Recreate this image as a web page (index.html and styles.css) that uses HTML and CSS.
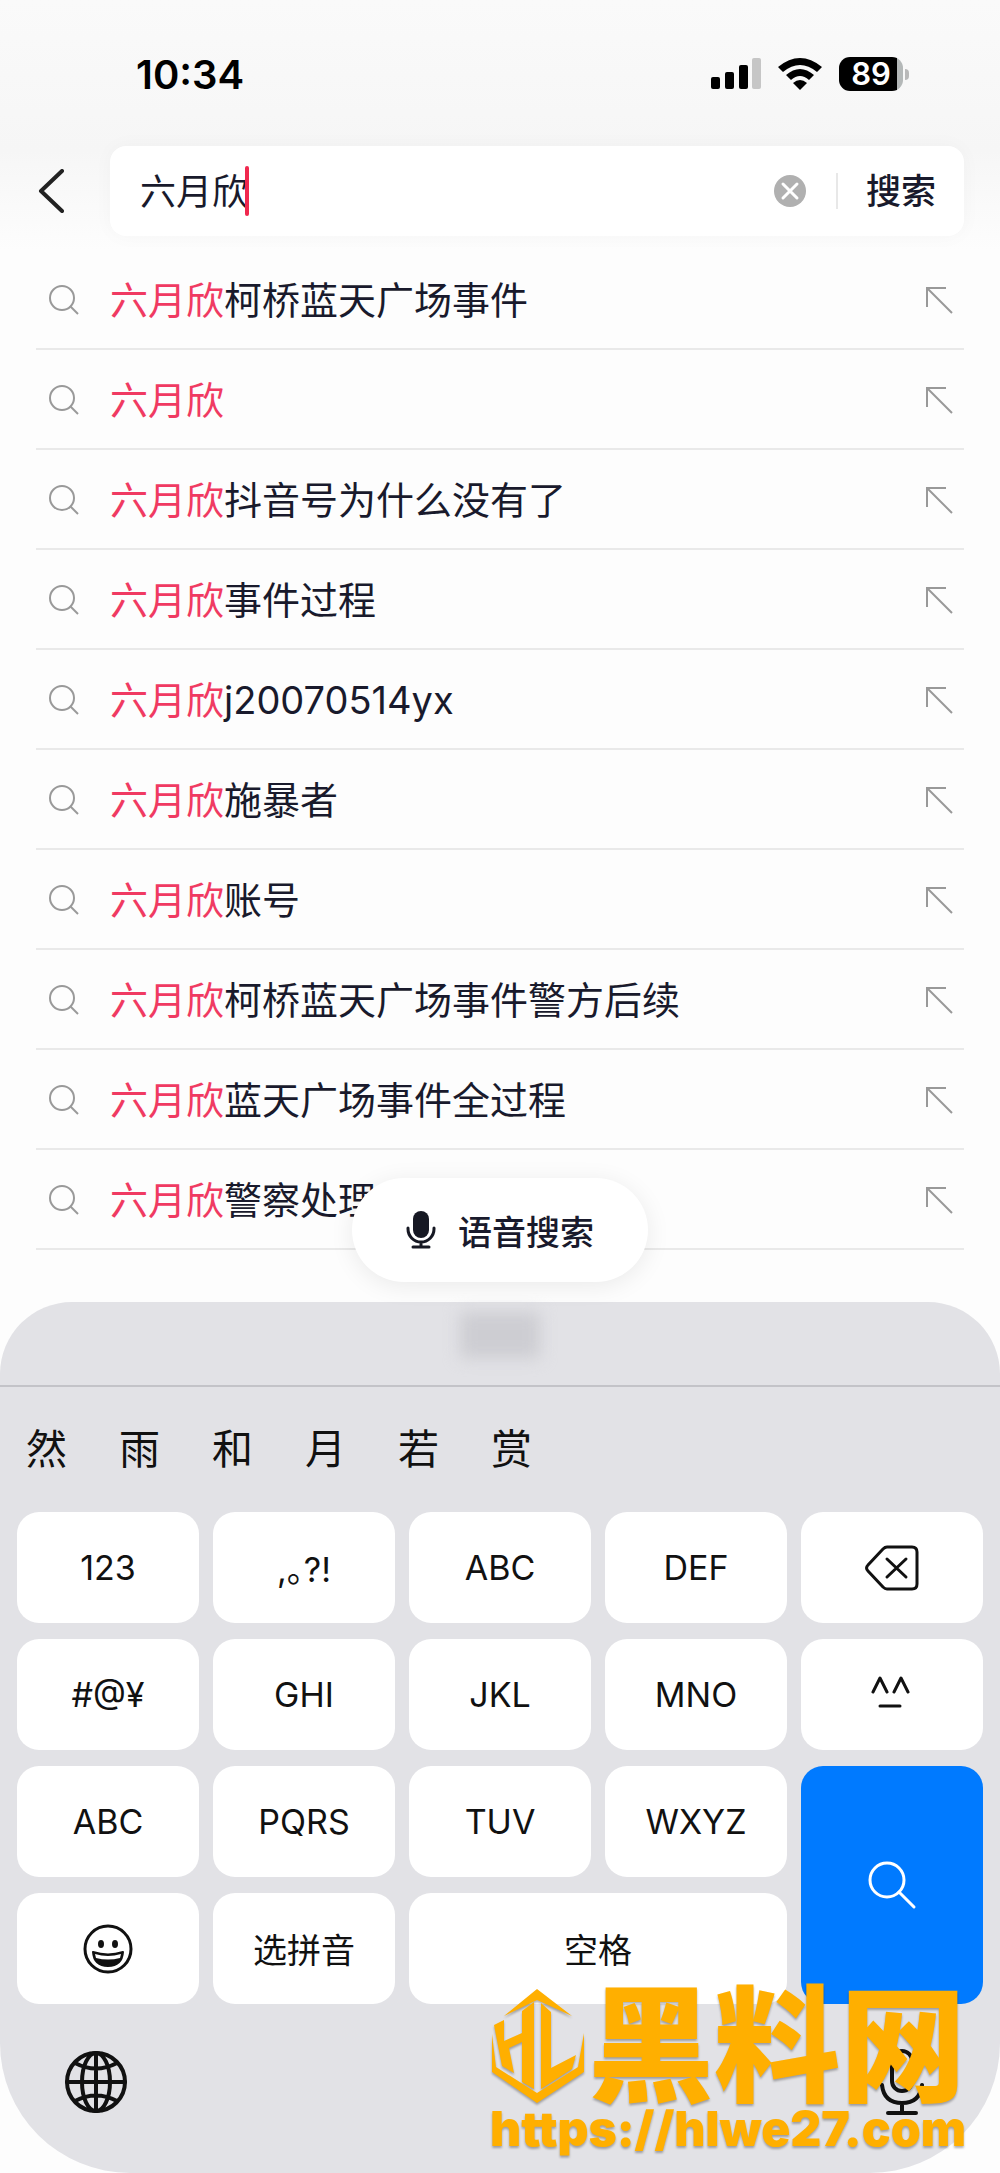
FILE: index.html
```html
<!DOCTYPE html>
<html lang="zh-CN">
<head>
  <meta charset="UTF-8">
  <meta name="viewport" content="width=device-width, initial-scale=1.0">
  <title>搜索</title>
  <link rel="stylesheet" href="styles.css">
</head>
<body>
  <svg class="sprite" aria-hidden="true">
    <symbol id="icon-search" viewBox="0 0 32 32">
      <circle cx="14" cy="14" r="12" /><path d="M22 22l8 8" />
    </symbol>
    <symbol id="icon-fill" viewBox="0 0 32 32">
      <path d="M5 23V4h19M5 4l25 25" />
    </symbol>
  </svg>

  <header class="header">
    <div class="status-bar">
      <span class="time">10:34</span>
      <div class="status-icons">
        <svg width="50" height="32" viewBox="0 0 50 32">
          <rect x="0" y="19" width="9" height="12" rx="2" />
          <rect x="14" y="14" width="9" height="17" rx="2" />
          <rect x="28" y="7" width="9" height="24" rx="2" />
          <rect x="41" y="0" width="9" height="31" rx="2" fill="#c6c6c6" />
        </svg>
        <svg width="44" height="32" viewBox="0 0 44 32">
          <path d="M0 9Q22-9 44 9L39 14Q22 0 5 14Z" />
          <path d="M8 17Q22 5 36 17L31 22Q22 14 13 22Z" />
          <path d="M15 25Q22 19 29 25L22 32Z" />
        </svg>
        <div class="battery"><span class="battery-level">89</span></div>
      </div>
    </div>

    <form class="search-bar">
      <button type="button" class="back" aria-label="返回">
        <svg width="30" height="44" viewBox="0 0 30 44"><path d="M26 2L5 22l21 20" /></svg>
      </button>
      <div class="search-box">
        <div class="field">
          <input type="text" id="keyword" value="六月欣" aria-label="搜索关键词">
          <span class="caret"></span>
        </div>
        <button type="button" class="clear" aria-label="清除">
          <svg width="32" height="32" viewBox="0 0 32 32">
            <circle cx="16" cy="16" r="16" fill="#b0b0b0" />
            <path d="M9 9l14 14M23 9L9 23" stroke="#fff" stroke-width="3" stroke-linecap="round" />
          </svg>
        </button>
        <button type="submit" class="submit">搜索</button>
      </div>
    </form>
  </header>

  <main class="results">
    <ul class="suggestions">
      <li><a href="#"><svg class="glass"><use href="#icon-search" /></svg><span class="word"><em>六月欣</em>柯桥蓝天广场事件</span><svg class="fill"><use href="#icon-fill" /></svg></a></li>
      <li><a href="#"><svg class="glass"><use href="#icon-search" /></svg><span class="word"><em>六月欣</em></span><svg class="fill"><use href="#icon-fill" /></svg></a></li>
      <li><a href="#"><svg class="glass"><use href="#icon-search" /></svg><span class="word"><em>六月欣</em>抖音号为什么没有了</span><svg class="fill"><use href="#icon-fill" /></svg></a></li>
      <li><a href="#"><svg class="glass"><use href="#icon-search" /></svg><span class="word"><em>六月欣</em>事件过程</span><svg class="fill"><use href="#icon-fill" /></svg></a></li>
      <li><a href="#"><svg class="glass"><use href="#icon-search" /></svg><span class="word"><em>六月欣</em>j20070514yx</span><svg class="fill"><use href="#icon-fill" /></svg></a></li>
      <li><a href="#"><svg class="glass"><use href="#icon-search" /></svg><span class="word"><em>六月欣</em>施暴者</span><svg class="fill"><use href="#icon-fill" /></svg></a></li>
      <li><a href="#"><svg class="glass"><use href="#icon-search" /></svg><span class="word"><em>六月欣</em>账号</span><svg class="fill"><use href="#icon-fill" /></svg></a></li>
      <li><a href="#"><svg class="glass"><use href="#icon-search" /></svg><span class="word"><em>六月欣</em>柯桥蓝天广场事件警方后续</span><svg class="fill"><use href="#icon-fill" /></svg></a></li>
      <li><a href="#"><svg class="glass"><use href="#icon-search" /></svg><span class="word"><em>六月欣</em>蓝天广场事件全过程</span><svg class="fill"><use href="#icon-fill" /></svg></a></li>
      <li><a href="#"><svg class="glass"><use href="#icon-search" /></svg><span class="word"><em>六月欣</em>警察处理</span><svg class="fill"><use href="#icon-fill" /></svg></a></li>
    </ul>
    <button type="button" class="voice">
      <svg width="30" height="38" viewBox="0 0 30 38">
        <rect x="7" y="0" width="16" height="27" rx="8" fill="#161823" />
        <path d="M2 17v1a13 13 0 0 0 26 0v-1M15 31v5M7 36h16" fill="none" stroke="#161823" stroke-width="3" stroke-linecap="round" />
      </svg>
      语音搜索
    </button>
  </main>

  <section class="keyboard">
    <div class="toolbar"><span class="smudge"></span></div>
    <div class="candidates">
      <button type="button">然</button>
      <button type="button">雨</button>
      <button type="button">和</button>
      <button type="button">月</button>
      <button type="button">若</button>
      <button type="button">赏</button>
    </div>
    <div class="keys">
      <button type="button">123</button>
      <button type="button" class="punct">,。?!</button>
      <button type="button">ABC</button>
      <button type="button">DEF</button>
      <button type="button" aria-label="删除">
        <svg width="54" height="46" viewBox="0 0 54 46">
          <path d="M22 2h25q5 0 5 5v32q0 5-5 5H22q-2 0-4-2L3 26q-3-3 0-6L18 4q2-2 4-2ZM22 14l19 18M41 14L22 32" />
        </svg>
      </button>
      <button type="button">#@¥</button>
      <button type="button">GHI</button>
      <button type="button">JKL</button>
      <button type="button">MNO</button>
      <button type="button" aria-label="颜文字">
        <svg width="42" height="42" viewBox="0 0 42 42">
          <path d="M2 18L9 4l7 14M23 18l7-14 7 14M9 32h20" />
        </svg>
      </button>
      <button type="button">ABC</button>
      <button type="button">PQRS</button>
      <button type="button">TUV</button>
      <button type="button">WXYZ</button>
      <button type="button" class="enter" aria-label="搜索">
        <svg width="50" height="50" viewBox="0 0 50 50">
          <circle cx="20" cy="20" r="17" /><path d="M32 32l15 15" />
        </svg>
      </button>
      <button type="button" aria-label="表情">
        <svg width="50" height="50" viewBox="0 0 50 50">
          <circle cx="25" cy="25" r="23" />
          <ellipse cx="18" cy="20" rx="3" ry="4" fill="#111" stroke="none" />
          <ellipse cx="32" cy="20" rx="3" ry="4" fill="#111" stroke="none" />
          <path d="M10 28q15 5 30 0q-1 14-15 14T10 28Z" fill="#111" stroke-width="2" />
          <path d="M12 30q13 4 26 0l-1 4q-12 3-24 0Z" fill="#fff" stroke="none" />
        </svg>
      </button>
      <button type="button">选拼音</button>
      <button type="button" class="space">空格</button>
    </div>
    <div class="bottom-bar">
      <button type="button" aria-label="切换输入法">
        <svg width="62" height="62" viewBox="0 0 62 62">
          <circle cx="31" cy="31" r="29" />
          <ellipse cx="31" cy="31" rx="14" ry="29" />
          <path d="M31 2v58M2 31h58M10 12q21 11 42 0M10 50q21-11 42 0" />
        </svg>
      </button>
      <button type="button" aria-label="听写">
        <svg width="44" height="66" viewBox="0 0 44 66">
          <rect x="12" y="2" width="20" height="40" rx="10" />
          <path d="M2 36q2 18 20 18t20-18M22 54v10M8 64h28" />
        </svg>
      </button>
    </div>
  </section>

  <div class="watermark">
    <div class="brand">
      <svg width="96" height="116" viewBox="0 0 96 116">
        <path d="M47 1L82 28 47 12 14 28Z" />
        <path d="M4 37L14 32V53L32 45V23L44 14V101L32 94V54L19 60L24 85L12 78Z" />
        <path d="M51 15L61 24V80L86 67L82 81L51 101Z" />
        <path d="M94 45V84L47 115 2 84V46L6 79 47 105 88 79Z" />
      </svg>
      <strong>黑料网</strong>
    </div>
    <span class="address">https://hlwe27.com</span>
  </div>
</body>
</html>
```
FILE: styles.css
```css
* {
  box-sizing: border-box;
}
body {
  position: relative;
  margin: 0;
  background-color: #fdfdfd;
  color: #191a2c;
  font-family: Inter, "Noto Sans CJK SC", sans-serif;
}
button, input {
  padding: 0;
  border: none;
  background: none;
  color: inherit;
  font-family: inherit;
}
button {
  cursor: pointer;
}
svg {
  display: block;
  flex: none;
}
.sprite {
  position: absolute;
  width: 0;
  height: 0;
}

/* status bar and search */
.header {
  padding-bottom: 14px;
  background: linear-gradient(#fafafa, #f6f6f6 60%, #fdfdfd);
}
.status-bar {
  display: flex;
  justify-content: space-between;
  align-items: center;
  height: 146px;
  padding: 2px 91px 0 136px;
  color: #000;
}
.time {
  font-size: 40px;
  font-weight: 600;
}
.status-icons {
  display: flex;
  align-items: center;
  gap: 17px;
}
.battery {
  position: relative;
  width: 64px;
  height: 34px;
  margin-right: 6px;
  border-radius: 11px;
  background: linear-gradient(to right, #000 90%, #b4b8b8 90%);
}
.battery::after {
  content: "";
  position: absolute;
  top: 12px;
  right: -6px;
  width: 4px;
  height: 11px;
  border-radius: 0 4px 4px 0;
  background-color: #b9b9b9;
}
.battery-level {
  display: block;
  color: #fff;
  font-size: 31px;
  font-weight: 600;
  line-height: 34px;
  text-align: center;
}
.search-bar {
  display: flex;
  align-items: center;
  padding: 0 36px;
}
.back {
  width: 74px;
}
.back svg {
  fill: none;
  stroke: #222;
  stroke-width: 4;
  stroke-linecap: round;
  stroke-linejoin: round;
}
.search-box {
  display: flex;
  flex: 1;
  align-items: center;
  height: 90px;
  padding: 0 28px;
  border-radius: 16px;
  background-color: #fff;
  box-shadow: 0 0 20px rgba(0, 0, 0, 0.03);
}
.field {
  position: relative;
  flex: 1;
}
.field input {
  width: 100%;
  height: 60px;
  padding: 0 2px 4px;
  font-size: 36px;
  outline: none;
}
.caret {
  position: absolute;
  top: 5px;
  left: 107px;
  width: 4px;
  height: 50px;
  border-radius: 2px;
  background-color: #f0284e;
}
.submit {
  margin-left: 30px;
  padding-left: 28px;
  border-left: 2px solid #e8e8e8;
  font-size: 35px;
  font-weight: 500;
  line-height: 36px;
}

/* suggestion list */
.results {
  position: relative;
  padding: 0 36px 52px;
}
.suggestions {
  margin: 0;
  padding: 0;
  list-style: none;
}
.suggestions a {
  display: flex;
  align-items: center;
  height: 100px;
  padding: 2px 10px 0 12px;
  border-bottom: 2px solid #e9e9e9;
  color: inherit;
  text-decoration: none;
}
.word {
  flex: 1;
  font-size: 38px;
  line-height: 56px;
}
.word em {
  color: #f03a62;
  font-style: normal;
}
.glass, .fill {
  width: 32px;
  height: 32px;
  fill: none;
  stroke: #999;
  stroke-width: 2;
}
.glass {
  margin-right: 30px;
}
.voice {
  position: absolute;
  left: 50%;
  bottom: 20px;
  display: flex;
  align-items: center;
  gap: 22px;
  height: 104px;
  padding: 0 54px;
  border-radius: 52px;
  background-color: #fff;
  box-shadow: 0 4px 24px rgba(0, 0, 0, 0.08);
  font-size: 34px;
  font-weight: 500;
  white-space: nowrap;
  transform: translateX(-50%);
}

/* keyboard */
.keyboard {
  padding-bottom: 58px;
  border-radius: 72px 72px 130px 130px;
  background-color: #e2e2e6;
}
.toolbar {
  display: flex;
  justify-content: center;
  height: 85px;
  padding-top: 10px;
  border-bottom: 2px solid #c3c3c8;
}
.smudge {
  width: 80px;
  height: 46px;
  background-color: #cdcdd2;
  filter: blur(8px);
}
.candidates {
  display: flex;
  gap: 52px;
  align-items: center;
  height: 125px;
  padding: 0 26px 8px;
}
.candidates button {
  color: #111;
  font-size: 41px;
}
.keys {
  display: grid;
  grid-template-columns: repeat(5, 1fr);
  grid-auto-rows: 111px;
  gap: 16px 14px;
  padding: 0 17px;
}
.keys button {
  display: flex;
  justify-content: center;
  align-items: center;
  border-radius: 22px;
  background-color: #fff;
  color: #111;
  font-size: 34px;
}
.keys svg, .bottom-bar svg {
  fill: none;
  stroke: #111;
  stroke-width: 3;
  stroke-linecap: round;
  stroke-linejoin: round;
}
.keys .punct {
  font-feature-settings: "halt";
}
.keys .enter {
  grid-row: span 2;
  background-color: #007aff;
}
.keys .enter svg {
  stroke: #fff;
}
.keys .space {
  grid-column: span 2;
}
.bottom-bar {
  display: flex;
  justify-content: space-between;
  align-items: center;
  padding: 45px 76px 0 65px;
}
.bottom-bar svg {
  stroke-width: 4;
}

/* site mark over the keyboard */
.watermark {
  position: absolute;
  right: 34px;
  bottom: 18px;
  color: #ffaf00;
  filter: drop-shadow(0 2px 1px rgba(0, 0, 0, 0.3));
}
.brand {
  display: flex;
  justify-content: space-between;
  align-items: center;
  height: 114px;
}
.brand svg {
  fill: #ffaf00;
}
.brand strong {
  font-size: 126px;
  font-weight: 900;
  line-height: 114px;
}
.address {
  display: block;
  font-size: 48px;
  font-weight: 900;
  line-height: 52px;
}
```
